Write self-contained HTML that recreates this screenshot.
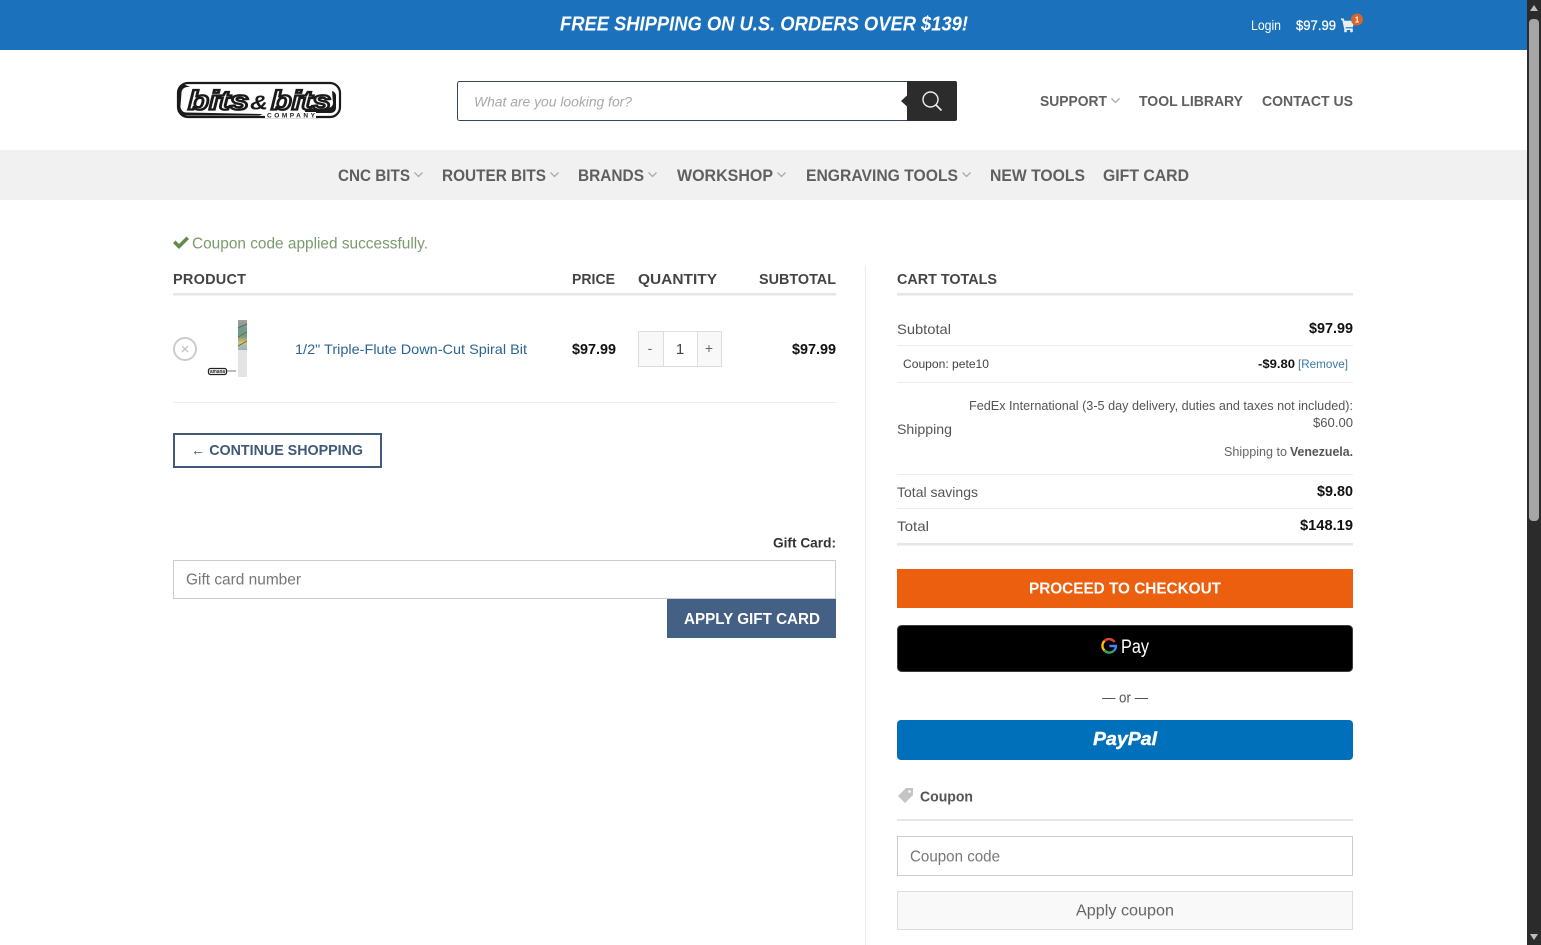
<!DOCTYPE html>
<html lang="en"><head><meta charset="utf-8"><title>Cart</title>
<style>
html,body{margin:0;padding:0;width:1541px;height:945px;overflow:hidden;background:#fff}
svg{display:block;font-family:"Liberation Sans",Arial,sans-serif}
.b{font-weight:700}
</style></head><body>
<svg width="1541" height="945" viewBox="0 0 1541 945" xmlns="http://www.w3.org/2000/svg">
<defs><linearGradient id="fl" x1="0" x2="0" y1="0" y2="1"><stop offset="0" stop-color="#a89f98"/><stop offset=".3" stop-color="#6f9c8c"/><stop offset=".55" stop-color="#7d9a78"/><stop offset=".75" stop-color="#d6c271"/><stop offset="1" stop-color="#8fb4cc"/></linearGradient></defs>
<rect width="1541" height="945" fill="#fff"/>
<!-- top banner -->
<rect width="1527" height="50" fill="#1c71bd"/>
<text x="560" y="30.500" font-size="20" font-weight="700" font-style="italic" fill="#fff" textLength="408" lengthAdjust="spacingAndGlyphs">FREE SHIPPING ON U.S. ORDERS OVER $139!</text>
<text x="1251" y="30" font-size="14" fill="#fff" textLength="30" lengthAdjust="spacingAndGlyphs">Login</text>
<text x="1296" y="30" font-size="14" fill="#fff" stroke="#fff" stroke-width=".25" textLength="40" lengthAdjust="spacingAndGlyphs">$97.99</text>
<path d="M1341 18.500h2.800l.6 2.200h10.100l-1.700 6.500h-7.300l.3 1.200h7v1.600h-8.400l-2.100-9.900h-1.300z" fill="#e6eff8"/><circle cx="1345.500" cy="31" r="1.400" fill="#e6eff8"/><circle cx="1351.500" cy="31" r="1.400" fill="#e6eff8"/>
<circle cx="1357" cy="19.500" r="6" fill="#d9642a"/><text x="1357" y="22.500" font-size="8" font-weight="700" fill="#fff" text-anchor="middle">1</text>
<!-- logo -->
<rect x="178" y="83" width="162" height="34" rx="10" fill="#fff" stroke="#1a1a1a" stroke-width="2.200"/>
<path d="M190 87h-3a6 6 0 0 0-5.500 6l-1 13a6 6 0 0 0 6 6.500l76 1.500-3 1.500h-75a8 8 0 0 1-7-8v-15a8 8 0 0 1 7-8z" fill="#1a1a1a"/>
<path d="M305 113h26a5 5 0 0 0 5-5v-12a5 5 0 0 0-4-5l1 12a5 5 0 0 1-5 5l-23 1z" fill="#1a1a1a"/>
<g font-weight="700" font-style="italic" font-size="27" fill="#fff" stroke="#1a1a1a" stroke-width="2.300">
<text x="188" y="109.500" textLength="61" lengthAdjust="spacingAndGlyphs">bits</text>
<text x="271" y="109.500" textLength="60" lengthAdjust="spacingAndGlyphs">bits</text>
</g>
<text x="250" y="109.500" font-size="20" font-weight="700" font-style="italic" fill="#1a1a1a" textLength="18" lengthAdjust="spacingAndGlyphs">&amp;</text>
<rect x="265" y="112" width="51" height="6" fill="#fff"/>
<text x="267" y="117.500" font-size="6.500" font-weight="700" fill="#1a1a1a" textLength="48" lengthAdjust="spacing">COMPANY</text>
<!-- search -->
<rect x="457.500" y="81.500" width="499" height="39" rx="2" fill="#fff" stroke="#34475e"/>
<text x="474" y="106.500" font-size="14" font-style="italic" fill="#a8a8a8" textLength="158" lengthAdjust="spacingAndGlyphs">What are you looking for?</text>
<path d="M907 81h48a2 2 0 0 1 2 2v36a2 2 0 0 1-2 2h-48v-14.500l-6-5.500 6-5.500z" fill="#2c2c2c"/>
<circle cx="930.500" cy="99.500" r="7.500" fill="none" stroke="#f0f0f0" stroke-width="1.400"/><path d="M936 105l5.500 5.500" stroke="#f0f0f0" stroke-width="1.600"/>
<g font-size="15" font-weight="700" fill="#5f5f5f">
<text x="1040" y="106" textLength="67" lengthAdjust="spacingAndGlyphs">SUPPORT</text>
<text x="1139" y="106" textLength="104" lengthAdjust="spacingAndGlyphs">TOOL LIBRARY</text>
<text x="1262" y="106" textLength="91" lengthAdjust="spacingAndGlyphs">CONTACT US</text>
</g>
<path d="M1111.500 98.500l4 4 4-4" fill="none" stroke="#aaa" stroke-width="1.300"/>
<!-- nav -->
<rect y="150" width="1527" height="50" fill="#f1f1f1"/>
<g font-size="17" font-weight="700" fill="#5f5f5f">
<text x="338" y="181" textLength="72" lengthAdjust="spacingAndGlyphs">CNC BITS</text>
<text x="442" y="181" textLength="104" lengthAdjust="spacingAndGlyphs">ROUTER BITS</text>
<text x="578" y="181" textLength="66" lengthAdjust="spacingAndGlyphs">BRANDS</text>
<text x="677" y="181" textLength="96" lengthAdjust="spacingAndGlyphs">WORKSHOP</text>
<text x="806" y="181" textLength="152" lengthAdjust="spacingAndGlyphs">ENGRAVING TOOLS</text>
<text x="990" y="181" textLength="95" lengthAdjust="spacingAndGlyphs">NEW TOOLS</text>
<text x="1103" y="181" textLength="86" lengthAdjust="spacingAndGlyphs">GIFT CARD</text>
</g>
<g fill="none" stroke="#aaa" stroke-width="1.300">
<path d="M414.500 172.500l4 4 4-4"/><path d="M550.500 172.500l4 4 4-4"/><path d="M648.500 172.500l4 4 4-4"/><path d="M777.500 172.500l4 4 4-4"/><path d="M962.500 172.500l4 4 4-4"/>
</g>
<!-- message -->
<path d="M173 243l2.500-2.500 3.500 3.500 7.500-7.500 2.500 2.500-10 10z" fill="#5f8a4c"/>
<text x="192" y="248.500" font-size="15.500" fill="#7b9a6d" textLength="236" lengthAdjust="spacingAndGlyphs">Coupon code applied successfully.</text>
<!-- cart table -->
<g font-size="14.500" font-weight="700" fill="#444">
<text x="173" y="284" textLength="73" lengthAdjust="spacing">PRODUCT</text>
<text x="572" y="284" textLength="43" lengthAdjust="spacingAndGlyphs">PRICE</text>
<text x="638" y="284" textLength="79" lengthAdjust="spacingAndGlyphs">QUANTITY</text>
<text x="759" y="284" textLength="77" lengthAdjust="spacingAndGlyphs">SUBTOTAL</text>
<text x="897" y="284" textLength="100" lengthAdjust="spacingAndGlyphs">CART TOTALS</text>
</g>
<rect x="173" y="293" width="663" height="2.500" fill="#e6e6e6"/>
<rect x="897" y="293" width="456" height="2.500" fill="#e6e6e6"/>
<rect x="865" y="265" width="1" height="680" fill="#ececec"/>
<circle cx="185" cy="349" r="11" fill="#fff" stroke="#ccc" stroke-width="2"/>
<path d="M182 346l6 6M188 346l-6 6" stroke="#c4c4c4" stroke-width="1.300"/>
<!-- product image -->
<rect x="238" y="320" width="9" height="30" fill="url(#fl)"/>
<path d="M238 328l9-4M238 337l9-5M238 346l9-5" stroke="#5d6b66" stroke-width="1"/>
<rect x="238" y="350" width="9" height="27" rx="1" fill="#e2e4e4"/>
<rect x="208.500" y="368.500" width="18" height="6" rx="2" fill="#fff" stroke="#222" stroke-width="1.300"/>
<text x="210" y="373" font-size="5" font-weight="700" fill="#222" textLength="15" lengthAdjust="spacingAndGlyphs">amana</text>
<path d="M227 371h9" stroke="#777"/>
<text x="295" y="354" font-size="14" fill="#2a6595" textLength="232" lengthAdjust="spacingAndGlyphs">1/2" Triple-Flute Down-Cut Spiral Bit</text>
<text x="572" y="354" font-size="14.500" font-weight="700" fill="#111" textLength="44" lengthAdjust="spacingAndGlyphs">$97.99</text>
<text x="792" y="354" font-size="14.500" font-weight="700" fill="#111" textLength="44" lengthAdjust="spacingAndGlyphs">$97.99</text>
<rect x="638.500" y="331.500" width="83" height="35" fill="#f8f8f8" stroke="#ddd"/>
<rect x="663.500" y="331.500" width="34" height="35" fill="#fff" stroke="#ddd"/>
<text x="650" y="353" font-size="14" fill="#666" text-anchor="middle">-</text>
<text x="680" y="354" font-size="15" fill="#444" text-anchor="middle">1</text>
<text x="709" y="353" font-size="14" fill="#666" text-anchor="middle">+</text>
<rect x="173" y="402" width="663" height="1" fill="#ececec"/>
<rect x="174" y="434" width="207" height="33" fill="#fff" stroke="#3f5a78" stroke-width="2"/>
<text x="191" y="455" font-size="15" font-weight="700" fill="#3f5a78" textLength="172" lengthAdjust="spacingAndGlyphs">← CONTINUE SHOPPING</text>
<text x="773" y="547.500" font-size="14" font-weight="700" fill="#333" textLength="63" lengthAdjust="spacingAndGlyphs">Gift Card:</text>
<rect x="173.500" y="560.500" width="662" height="38" fill="#fff" stroke="#ccc"/>
<text x="186" y="584.500" font-size="16" fill="#777" textLength="115" lengthAdjust="spacingAndGlyphs">Gift card number</text>
<rect x="667" y="599" width="169" height="39" fill="#446084"/>
<text x="684" y="624" font-size="16" font-weight="700" fill="#fff" textLength="136" lengthAdjust="spacingAndGlyphs">APPLY GIFT CARD</text>
<!-- totals -->
<text x="897" y="334" font-size="14" fill="#555" textLength="54" lengthAdjust="spacingAndGlyphs">Subtotal</text>
<text x="1309" y="333" font-size="14.500" font-weight="700" fill="#111" textLength="44" lengthAdjust="spacingAndGlyphs">$97.99</text>
<rect x="897" y="345" width="456" height="1" fill="#ececec"/>
<text x="903" y="368" font-size="12" fill="#444" textLength="86" lengthAdjust="spacingAndGlyphs">Coupon: pete10</text>
<text x="1258" y="368" font-size="12" fill="#111" font-weight="700" textLength="37" lengthAdjust="spacingAndGlyphs">-$9.80</text>
<text x="1298" y="368" font-size="12" fill="#3a78a8" textLength="50" lengthAdjust="spacingAndGlyphs">[Remove]</text>
<rect x="897" y="382" width="456" height="1" fill="#ececec"/>
<text x="969" y="410" font-size="13" fill="#555" textLength="384" lengthAdjust="spacingAndGlyphs">FedEx International (3-5 day delivery, duties and taxes not included):</text>
<text x="1313" y="427" font-size="13" fill="#555" textLength="40" lengthAdjust="spacingAndGlyphs">$60.00</text>
<text x="897" y="434" font-size="14" fill="#555" textLength="55" lengthAdjust="spacingAndGlyphs">Shipping</text>
<text x="1224" y="456" font-size="13" fill="#666" textLength="63" lengthAdjust="spacingAndGlyphs">Shipping to</text>
<text x="1290" y="456" font-size="13" font-weight="700" fill="#555" textLength="63" lengthAdjust="spacingAndGlyphs">Venezuela.</text>
<rect x="897" y="474" width="456" height="1" fill="#ececec"/>
<text x="897" y="497" font-size="14" fill="#555" textLength="81" lengthAdjust="spacingAndGlyphs">Total savings</text>
<text x="1317" y="496" font-size="14.500" font-weight="700" fill="#111" textLength="36" lengthAdjust="spacingAndGlyphs">$9.80</text>
<rect x="897" y="508" width="456" height="1" fill="#ececec"/>
<text x="897" y="531" font-size="14" fill="#555" textLength="32" lengthAdjust="spacingAndGlyphs">Total</text>
<text x="1300" y="530" font-size="14.500" font-weight="700" fill="#111" textLength="53" lengthAdjust="spacingAndGlyphs">$148.19</text>
<rect x="897" y="543" width="456" height="2.500" fill="#e6e6e6"/>
<rect x="897" y="569" width="456" height="39" fill="#ec5f0f"/>
<text x="1029" y="593.500" font-size="16" font-weight="700" fill="#fff" textLength="192" lengthAdjust="spacingAndGlyphs">PROCEED TO CHECKOUT</text>
<rect x="897.500" y="625.500" width="455" height="46" rx="4" fill="#000" stroke="#3c3c3c"/>
<g fill="none" stroke-width="2.400">
<path d="M1114.500 642a6.500 6.500 0 0 0-10-1" stroke="#ea4335"/>
<path d="M1104.500 641a6.500 6.500 0 0 0 0 9.500" stroke="#fbbc04"/>
<path d="M1104.500 650.500a6.500 6.500 0 0 0 9 .5" stroke="#34a853"/>
<path d="M1113.500 651a6.500 6.500 0 0 0 2.400-5h-6.500" stroke="#4285f4"/>
</g>
<text x="1121" y="653" font-size="19" fill="#fff" textLength="28" lengthAdjust="spacingAndGlyphs">Pay</text>
<text x="1102" y="702.500" font-size="15" fill="#555" textLength="46" lengthAdjust="spacingAndGlyphs">— or —</text>
<rect x="897" y="720" width="456" height="40" rx="4" fill="#0070ba"/>
<text x="1093" y="745" font-size="18" font-weight="700" font-style="italic" fill="#fff" stroke="#fff" stroke-width=".4" textLength="64" lengthAdjust="spacingAndGlyphs">PayPal</text>
<path d="M898 796l8-8h7v7l-8 8z" fill="#c4c4c4"/><circle cx="909.500" cy="791.500" r="1.300" fill="#fff"/>
<text x="920" y="801.500" font-size="15" font-weight="700" fill="#555" textLength="53" lengthAdjust="spacingAndGlyphs">Coupon</text>
<rect x="897" y="819" width="456" height="2" fill="#e6e6e6"/>
<rect x="897.500" y="836.500" width="455" height="39" fill="#fff" stroke="#ccc"/>
<text x="910" y="861.500" font-size="16" fill="#777" textLength="90" lengthAdjust="spacingAndGlyphs">Coupon code</text>
<rect x="897.500" y="891.500" width="455" height="38" fill="#f9f9f9" stroke="#ddd"/>
<text x="1076" y="915.500" font-size="16" fill="#666" textLength="98" lengthAdjust="spacingAndGlyphs">Apply coupon</text>
<!-- scrollbar -->
<rect x="1527" width="14" height="945" fill="#2b2b2b"/>
<rect x="1529" y="19" width="10" height="502" rx="4" fill="#a6a6a6"/>
<path d="M1534 5l4 6h-8z" fill="#bdbdbd"/>
<path d="M1534 940l4-6h-8z" fill="#bdbdbd"/>
</svg>
</body></html>
